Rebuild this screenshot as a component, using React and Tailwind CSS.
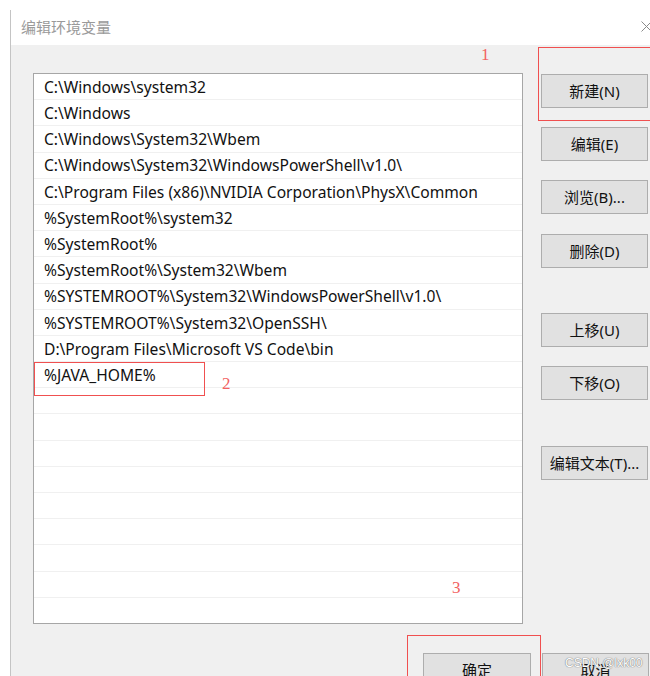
const paths = [
  "C:\\Windows\\system32",
  "C:\\Windows",
  "C:\\Windows\\System32\\Wbem",
  "C:\\Windows\\System32\\WindowsPowerShell\\v1.0\\",
  "C:\\Program Files (x86)\\NVIDIA Corporation\\PhysX\\Common",
  "%SystemRoot%\\system32",
  "%SystemRoot%",
  "%SystemRoot%\\System32\\Wbem",
  "%SYSTEMROOT%\\System32\\WindowsPowerShell\\v1.0\\",
  "%SYSTEMROOT%\\System32\\OpenSSH\\",
  "D:\\Program Files\\Microsoft VS Code\\bin",
  "%JAVA_HOME%",
];

const buttons = [
  { label: "新建(N)", mt: "mt-[1px]" },
  { label: "编辑(E)", mt: "mt-[19px]" },
  { label: "浏览(B)...", mt: "mt-[19px]" },
  { label: "删除(D)", mt: "mt-[20px]" },
  { label: "上移(U)", mt: "mt-[45px]" },
  { label: "下移(O)", mt: "mt-[19px]" },
  { label: "编辑文本(T)...", mt: "mt-[46px]" },
];

const font = "font-['Noto_Sans','Noto_Sans_CJK_SC',sans-serif]";

const Btn = ({ label, className = "" }) => (
  <div
    className={`h-[34px] shrink-0 flex items-center justify-center bg-[#e1e1e1] border border-[#adadad] text-[15px] text-[#111] whitespace-nowrap ${className}`}
  >
    {label}
  </div>
);

const App = () => {
  const rows = Array.from({ length: 21 }, (_, i) => paths[i] || "");

  return (
    <div className={`relative w-[650px] h-[676px] bg-white overflow-hidden flex ${font}`}>
      <div className="w-[10px] shrink-0 bg-white"></div>

      <div className="flex-1 flex flex-col border-l border-[#c4c4c4] mt-[10px]">
        <div className="h-[35px] shrink-0 bg-white flex items-center pl-[10px] text-[15px] text-[#9a9a9a]">
          编辑环境变量
        </div>

        <div className="flex-1 bg-[#f0f0f0] pl-[22px] pt-[28px] overflow-hidden">
          <div className="flex">
            <div className="w-[490px] h-[551px] shrink-0 bg-white border border-[#a6a6a6] overflow-hidden">
              {rows.map((p, i) => (
                <div
                  key={i}
                  className="h-[26.2px] border-b border-[#f0f0f0] flex items-center pl-[10px] pt-[2px] text-[15.6px] text-[#111] whitespace-nowrap"
                >
                  {p}
                </div>
              ))}
            </div>

            <div className="ml-[18px] w-[107px] shrink-0 flex flex-col">
              {buttons.map((b) => (
                <Btn key={b.label} label={b.label} className={b.mt} />
              ))}
            </div>
          </div>

          <div className="flex mt-[29px] ml-[390px] gap-[11px]">
            <Btn label="确定" className="w-[108px] shrink-0" />
            <Btn label="取消" className="w-[107px] shrink-0" />
          </div>
        </div>
      </div>

      {/* close button, cut off at the edge */}
      <svg className="absolute left-[641px] top-[21px]" width="11" height="11" viewBox="0 0 11 11">
        <path d="M0.5 0.5 L10.5 10.5 M10.5 0.5 L0.5 10.5" stroke="#8a8a8a" strokeWidth="1" />
      </svg>

      {/* red annotations */}
      <div className="absolute left-[538px] top-[47px] w-[120px] h-[74px] border border-[#f05050]"></div>
      <div className="absolute left-[34px] top-[362px] w-[171px] h-[34px] border border-[#f05050]"></div>
      <div className="absolute left-[407px] top-[635px] w-[134px] h-[60px] border border-[#f05050]"></div>

      <span className="absolute left-[481px] top-[42px] text-[17px] text-[#f26262] font-['Liberation_Serif',serif]">1</span>
      <span className="absolute left-[222px] top-[371px] text-[17px] text-[#f26262] font-['Liberation_Serif',serif]">2</span>
      <span className="absolute left-[452px] top-[575px] text-[17px] text-[#f26262] font-['Liberation_Serif',serif]">3</span>

      <span className="absolute left-[565px] top-[654px] text-[12px] text-white font-['Liberation_Sans',sans-serif] [text-shadow:0_0_1px_#777,0_0_1px_#777]">
        CSDN @lxk00
      </span>
    </div>
  );
};

export default App;
